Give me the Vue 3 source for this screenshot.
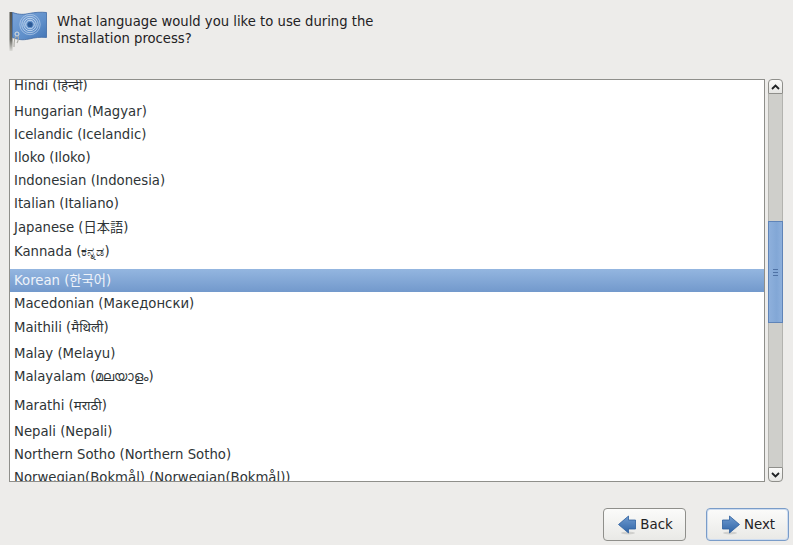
<script setup>
const rows = [
  { label: 'Hindi (हिन्दी)', h: 21, shift: -4 },
  { label: 'Hungarian (Magyar)', h: 23, shift: 0 },
  { label: 'Icelandic (Icelandic)', h: 23, shift: 0 },
  { label: 'Iloko (Iloko)', h: 23, shift: 0 },
  { label: 'Indonesian (Indonesia)', h: 23, shift: 0 },
  { label: 'Italian (Italiano)', h: 23, shift: 0 },
  { label: 'Japanese (日本語)', h: 24, shift: 1 },
  { label: 'Kannada (ಕನ್ನಡ)', h: 30, shift: -2.5 },
  { label: 'Korean (한국어)', h: 23, shift: 0, selected: true },
  { label: 'Macedonian (Македонски)', h: 23, shift: 0 },
  { label: 'Maithili (मैथिली)', h: 27, shift: -1 },
  { label: 'Malay (Melayu)', h: 23, shift: 0 },
  { label: 'Malayalam (മലയാളം)', h: 29, shift: -3 },
  { label: 'Marathi (मराठी)', h: 26, shift: -1 },
  { label: 'Nepali (Nepali)', h: 23, shift: 0 },
  { label: 'Northern Sotho (Northern Sotho)', h: 23, shift: 0 },
  { label: 'Norwegian(Bokmål) (Norwegian(Bokmål))', h: 23, shift: 0 }
]
const rowStyle = (r) => ({ height: r.h + 'px', lineHeight: (r.h + 2 * r.shift) + 'px' })
</script>

<template>
  <div class="screen">
    <header class="head">
      <svg class="flag" width="40" height="42" viewBox="0 0 40 42">
        <defs>
          <linearGradient id="flagfill" x1="0" y1="0" x2="1" y2="1">
            <stop offset="0" stop-color="#7ba4d8" />
            <stop offset="0.6" stop-color="#5f8fca" />
            <stop offset="1" stop-color="#4274b4" />
          </linearGradient>
          <linearGradient id="pole" x1="0" y1="0" x2="0" y2="1">
            <stop offset="0" stop-color="#55554f" />
            <stop offset="0.7" stop-color="#66665f" />
            <stop offset="1" stop-color="#dcdcd8" />
          </linearGradient>
        </defs>
        <rect x="0.5" y="1" width="3" height="39" fill="url(#pole)" />
        <path d="M3.5 1.5 C11 4 15 3.5 20 2.5 C26 1.2 32 1 37.5 1.5 L37.5 26.5 C31 26 26 26.5 20 28 C13 29.5 9 28.5 3.5 26.5 Z" fill="url(#flagfill)" stroke="#3f6aa5" stroke-width="0.8" />
        <g fill="none" stroke="#cfe0f3" stroke-width="0.9" transform="translate(21 13.5)">
          <circle r="10.2" opacity="0.6" />
          <circle r="8.2" opacity="0.8" />
          <circle r="6.2" opacity="0.9" />
          <circle r="4.3" />
        </g>
        <circle cx="21" cy="13.5" r="2.6" fill="#2c5a96" />
        <circle cx="8" cy="23" r="2" fill="none" stroke="#dfdfda" stroke-width="1" />
        <path d="M7 25 C5 28 5 32 5 36 M9 25 C10 27 9 30 8 32" fill="none" stroke="#a9a9a3" stroke-width="1.1" />
      </svg>
      <p class="question">What language would you like to use during the<br />installation process?</p>
    </header>

    <div class="picker">
      <div class="list">
        <div class="rows">
          <div v-for="r in rows" :key="r.label" class="row" :class="{ selected: r.selected }" :style="rowStyle(r)">{{ r.label }}</div>
        </div>
      </div>
      <div class="scrollbar">
        <div class="step up">
          <svg width="9" height="6" viewBox="0 0 9 6"><path d="M1 5 L4.5 1.5 L8 5" fill="none" stroke="#1f2224" stroke-width="1.8" /></svg>
        </div>
        <div class="track">
          <div class="thumb"><span class="grip"></span></div>
        </div>
        <div class="step down">
          <svg width="9" height="6" viewBox="0 0 9 6"><path d="M1 1 L4.5 4.5 L8 1" fill="none" stroke="#1f2224" stroke-width="1.8" /></svg>
        </div>
      </div>
    </div>

    <footer class="actions">
      <button class="btn" type="button">
        <svg width="18" height="20" viewBox="0 0 18 20">
          <defs>
            <linearGradient id="arrowb" x1="0" y1="0" x2="0" y2="1">
              <stop offset="0" stop-color="#6f9bd0" />
              <stop offset="1" stop-color="#2f64a6" />
            </linearGradient>
          </defs>
          <ellipse cx="10" cy="18" rx="7" ry="1.5" fill="#000" opacity="0.12" />
          <path d="M0.5 9.5 L10.5 1 L10.5 5 L17.5 5 L17.5 14 L10.5 14 L10.5 18 Z" fill="url(#arrowb)" stroke="#2d5f9e" stroke-width="0.8" />
        </svg>
        <span>Back</span>
      </button>
      <button class="btn focus" type="button">
        <svg width="18" height="20" viewBox="0 0 18 20">
          <defs>
            <linearGradient id="arrown" x1="0" y1="0" x2="0" y2="1">
              <stop offset="0" stop-color="#6f9bd0" />
              <stop offset="1" stop-color="#2f64a6" />
            </linearGradient>
          </defs>
          <ellipse cx="8" cy="18" rx="7" ry="1.5" fill="#000" opacity="0.12" />
          <path d="M17.5 9.5 L7.5 1 L7.5 5 L0.5 5 L0.5 14 L7.5 14 L7.5 18 Z" fill="url(#arrown)" stroke="#2d5f9e" stroke-width="0.8" />
        </svg>
        <span>Next</span>
      </button>
    </footer>
  </div>
</template>

<style>
html, body { margin: 0; background: #edecea; }
</style>

<style scoped>
.screen {
  width: 793px;
  height: 545px;
  box-sizing: border-box;
  padding: 11px 4px 4px 9px;
  background: #edecea;
  font-family: "DejaVu Sans", "Noto Sans", "Noto Sans CJK KR", "Noto Sans CJK JP", sans-serif;
  font-size: 13.25px;
  color: #2e3436;
  overflow: hidden;
  display: flex;
  flex-direction: column;
}
.head { display: flex; gap: 8px; height: 68px; }
.flag { flex: none; }
.question { margin: 2px 0 0; font-size: 13.2px; line-height: 17px; color: #1f2224; }
.picker { display: flex; gap: 3px; height: 403px; }
.list {
  width: 756px;
  box-sizing: border-box;
  border: 1px solid #8f8f8b;
  background: #fff;
  overflow: hidden;
}
.rows { margin-top: -1px; }
.row { padding-left: 4px; white-space: nowrap; }
.row.selected {
  color: #eef3fa;
  background: linear-gradient(#94b6e0, #7299cc);
}
.scrollbar { width: 15px; display: flex; flex-direction: column; }
.step {
  height: 15px;
  flex: none;
  box-sizing: border-box;
  border: 1px solid #8f8f8b;
  background: linear-gradient(#fafaf9, #e6e6e3);
  display: flex;
  align-items: center;
  justify-content: center;
}
.step.up { border-radius: 4px 4px 0 0; }
.step.down { border-radius: 0 0 4px 4px; }
.track {
  flex: 1;
  box-sizing: border-box;
  background: #cfcfcb;
  border-left: 1px solid #b3b3af;
  border-right: 1px solid #b3b3af;
  padding-top: 127px;
}
.thumb {
  margin: 0 -1px;
  height: 102px;
  box-sizing: border-box;
  border: 1px solid #5f84b8;
  background: linear-gradient(90deg, #8eb0dc, #82a7d6 60%, #8eb0dc);
  display: flex;
  align-items: center;
  justify-content: center;
}
.grip {
  width: 5px;
  height: 5px;
  border-top: 1px solid #4f72a5;
  border-bottom: 1px solid #4f72a5;
  background: linear-gradient(#4f72a5, #4f72a5) center / 100% 1px no-repeat;
}
.actions {
  display: flex;
  justify-content: flex-end;
  gap: 20px;
  margin-top: 26px;
}
.btn {
  width: 83px;
  height: 33px;
  box-sizing: border-box;
  border: 1px solid #8f8f8b;
  border-radius: 4px;
  background: linear-gradient(#fbfbfa, #e9e9e6);
  font: inherit;
  font-size: 13.4px;
  color: #1f2224;
  display: flex;
  align-items: center;
  justify-content: center;
  gap: 4px;
  padding: 0 0 0 2px;
}
.btn.focus { border-color: #7a9cc8; box-shadow: inset 0 0 0 1px #cddcf0; }
</style>
